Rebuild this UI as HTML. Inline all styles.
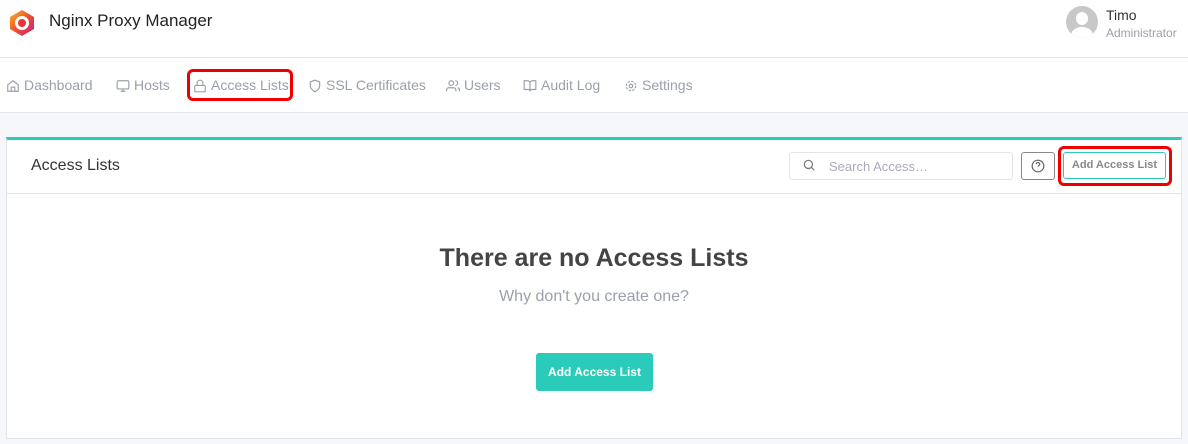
<!DOCTYPE html><html><head><style>
body{margin:0;width:1188px;height:444px;background:#f5f7fb;font-family:"Liberation Sans",sans-serif;position:relative;overflow:hidden;color:#495057}
.hdr{position:absolute;left:0;top:0;width:1188px;height:57px;background:#fff;border-bottom:1px solid #e0e5ec}
.nav{position:absolute;left:0;top:58px;width:1188px;height:54px;background:#fff;border-bottom:1px solid #e0e5ec}
.nav span{position:absolute;top:19px;font-size:14px;color:#9aa0ac}
.nav svg{position:absolute;top:21px}
.card{position:absolute;left:6px;top:137px;width:1176px;height:302px;background:#fff;border:1px solid #e0e5ec;border-top:3px solid #2bcbba;box-sizing:border-box}
.red{position:absolute;border:3px solid #e00;border-radius:6px}
</style></head><body>
<div class="hdr">
<svg style="position:absolute;left:9px;top:9px" width="26" height="28" viewBox="0 0 26 28"><defs><linearGradient id="g" x1="0" y1="0" x2="1" y2="1"><stop offset="0" stop-color="#f7b924"/><stop offset=".5" stop-color="#f0502c"/><stop offset="1" stop-color="#c21d8c"/></linearGradient></defs><polygon points="13,1 25,8 25,20 13,27 1,20 1,8" fill="url(#g)"/><circle cx="13" cy="14" r="7" fill="#fff"/><circle cx="13" cy="14" r="4" fill="#e8333a"/></svg>
<div style="position:absolute;left:49px;top:11px;font-size:17px;color:#222">Nginx Proxy Manager</div>
<div style="position:absolute;left:1066px;top:6px;width:32px;height:32px;border-radius:50%;background:#c8c8c8;overflow:hidden"><div style="position:absolute;left:10px;top:6px;width:12px;height:13px;border-radius:50%;background:#fff"></div><div style="position:absolute;left:5px;top:21px;width:22px;height:16px;border-radius:50%;background:#fff"></div></div>
<div style="position:absolute;left:1106px;top:7px;font-size:14px;color:#333">Timo</div>
<div style="position:absolute;left:1106px;top:26px;font-size:12px;color:#9aa0ac">Administrator</div>
</div>
<div class="nav">
<svg style="left:6px" width="14" height="14" viewBox="0 0 24 24" fill="none" stroke="#9aa0ac" stroke-width="2"><path d="M3 10l9-7 9 7v11H3z M9 21v-7h6v7"/></svg><span style="left:24px">Dashboard</span>
<svg style="left:116px" width="14" height="14" viewBox="0 0 24 24" fill="none" stroke="#9aa0ac" stroke-width="2"><rect x="2" y="3" width="20" height="14" rx="2"/><path d="M8 21h8M12 17v4"/></svg><span style="left:134px">Hosts</span>
<svg style="left:193px" width="14" height="14" viewBox="0 0 24 24" fill="none" stroke="#9aa0ac" stroke-width="2"><rect x="3" y="11" width="18" height="11" rx="2"/><path d="M7 11V7a5 5 0 0110 0v4"/></svg><span style="left:211px">Access Lists</span>
<svg style="left:308px" width="14" height="14" viewBox="0 0 24 24" fill="none" stroke="#9aa0ac" stroke-width="2"><path d="M12 22s8-4 8-10V5l-8-3-8 3v7c0 6 8 10 8 10z"/></svg><span style="left:326px">SSL Certificates</span>
<svg style="left:446px" width="14" height="14" viewBox="0 0 24 24" fill="none" stroke="#9aa0ac" stroke-width="2"><circle cx="9" cy="7" r="4"/><path d="M1 21v-2a4 4 0 014-4h8a4 4 0 014 4v2M16 3a4 4 0 010 8M23 21v-2a4 4 0 00-3-4"/></svg><span style="left:464px">Users</span>
<svg style="left:523px" width="14" height="14" viewBox="0 0 24 24" fill="none" stroke="#9aa0ac" stroke-width="2"><path d="M2 3h6a4 4 0 014 4v14a3 3 0 00-3-3H2zM22 3h-6a4 4 0 00-4 4v14a3 3 0 013-3h7z"/></svg><span style="left:541px">Audit Log</span>
<svg style="left:624px" width="14" height="14" viewBox="0 0 24 24" fill="none" stroke="#9aa0ac" stroke-width="2"><circle cx="12" cy="12" r="3"/><circle cx="12" cy="12" r="8" stroke-dasharray="4 2.3"/></svg><span style="left:642px">Settings</span>
</div>
<div class="red" style="left:187px;top:69px;width:100px;height:26px"></div>
<div class="card">
<div style="position:absolute;left:0;top:0;right:0;height:53px;border-bottom:1px solid #e0e5ec"></div>
<div style="position:absolute;left:24px;top:17px;font-size:16px;color:#333">Access Lists</div>
<div style="position:absolute;left:782px;top:12px;width:222px;height:26px;border:1px solid #e0e5ec;border-radius:3px"></div>
<svg style="position:absolute;left:795px;top:18px" width="14" height="14" viewBox="0 0 24 24" fill="none" stroke="#777" stroke-width="2"><circle cx="11" cy="11" r="7"/><path d="M21 21l-5-5"/></svg>
<div style="position:absolute;left:822px;top:19px;font-size:13px;color:#aab">Search Access…</div>
<div style="position:absolute;left:1014px;top:12px;width:34px;height:28px;border:1px solid #888;border-radius:3px;box-sizing:border-box"><svg style="position:absolute;left:9px;top:6px" width="14" height="14" viewBox="0 0 24 24" fill="none" stroke="#666" stroke-width="2"><circle cx="12" cy="12" r="10"/><path d="M9 9a3 3 0 116 0c0 2-3 2-3 4M12 17v.5"/></svg></div>
<div style="position:absolute;left:1056px;top:12px;width:103px;height:27px;border:1px solid #2bcbba;border-radius:3px;box-sizing:border-box;text-align:center;line-height:25px;font-size:11px;font-weight:bold;color:#888">Add Access List</div>
<div style="position:absolute;left:0;right:0;top:104px;text-align:center;font-size:25px;font-weight:bold;color:#444">There are no Access Lists</div>
<div style="position:absolute;left:0;right:0;top:148px;text-align:center;font-size:16px;color:#9aa0ac">Why don't you create one?</div>
<div style="position:absolute;left:529px;top:213px;width:117px;height:38px;background:#2bcbba;border-radius:3px;text-align:center;line-height:38px;font-size:12px;font-weight:bold;color:#fff">Add Access List</div>
</div>
<div class="red" style="left:1058px;top:146px;width:108px;height:34px"></div>
</body></html>
